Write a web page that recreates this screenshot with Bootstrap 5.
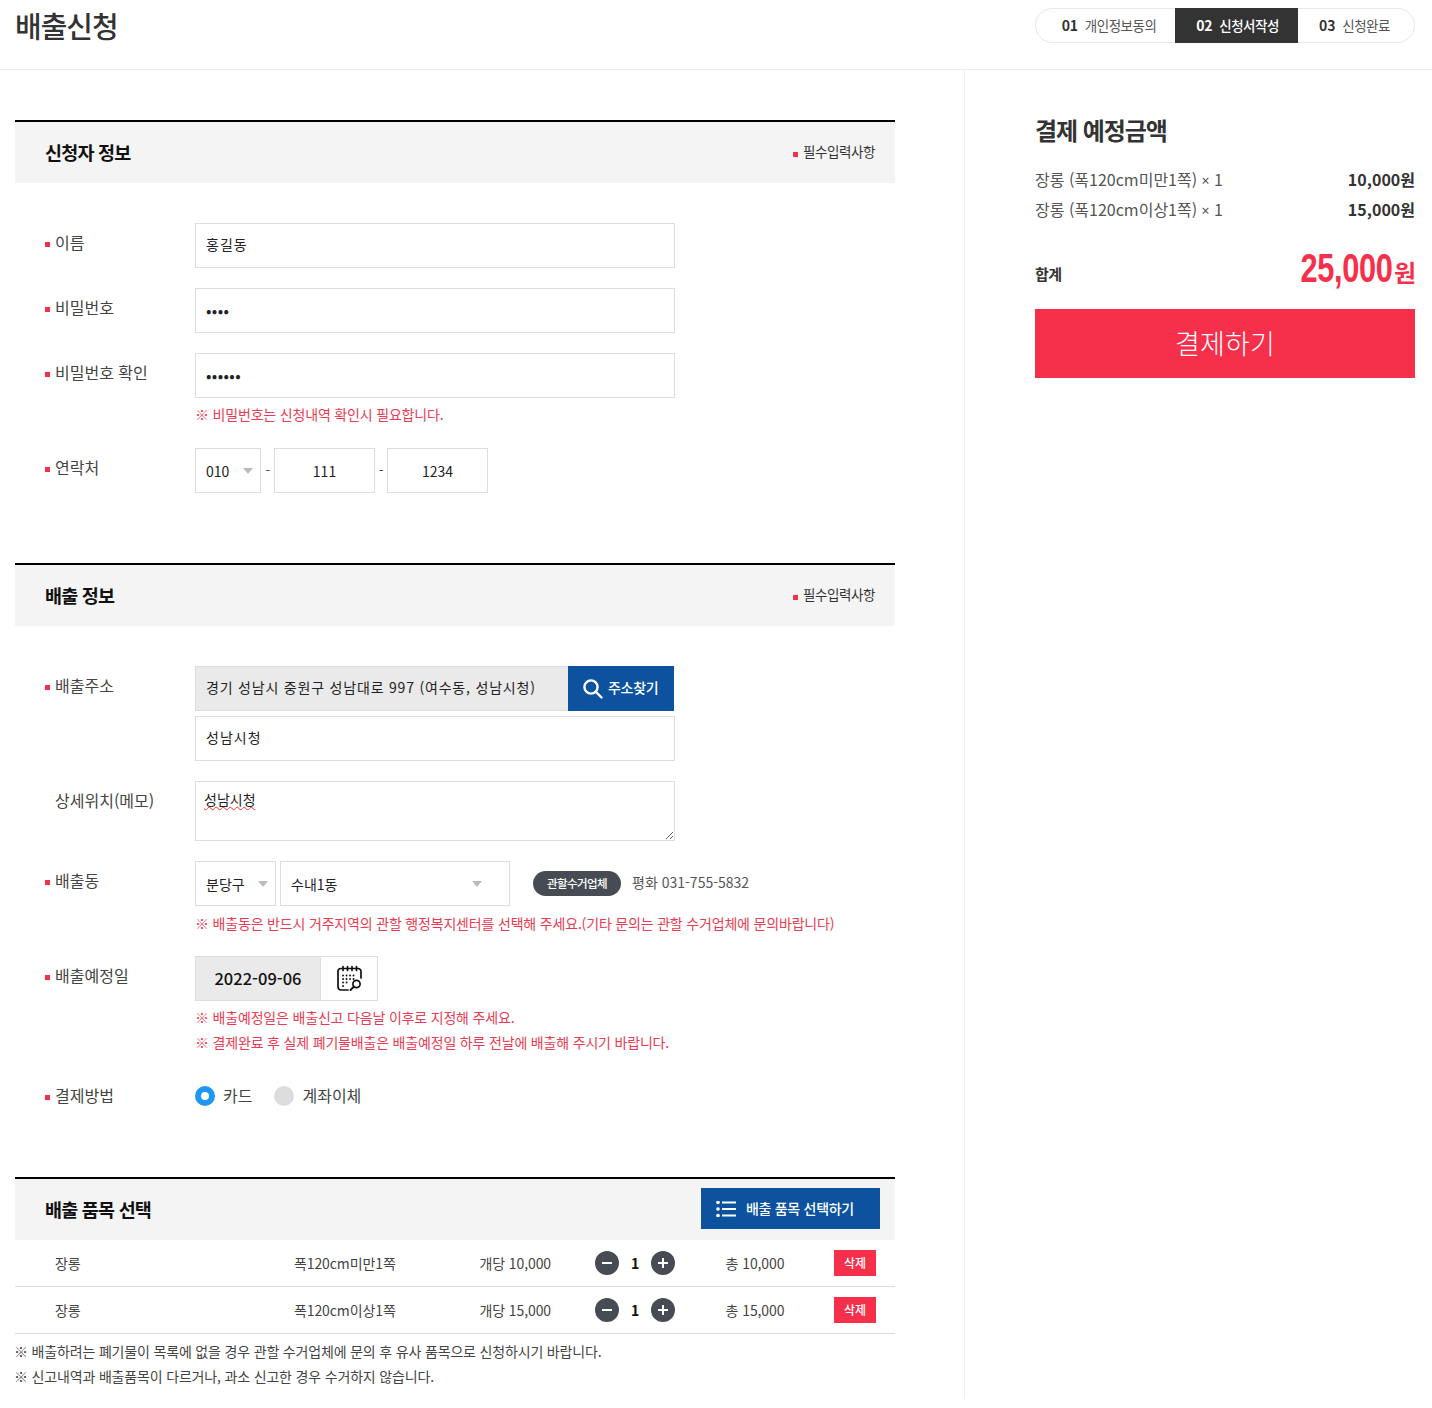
<!doctype html>
<html lang="ko">
<head>
<meta charset="utf-8">
<title>배출신청</title>
<link href="https://cdn.jsdelivr.net/npm/bootstrap@5.3.0/dist/css/bootstrap.min.css" rel="stylesheet">
<style>
body{font-family:"Noto Sans CJK KR","Noto Sans",sans-serif;font-size:14px;color:#333;letter-spacing:-.3px}
.top-bar{height:70px;border-bottom:1px solid #eee;padding:0 17px 0 15px}
.page-title{font-size:29px;font-weight:500;line-height:1;margin:0;color:#333;padding-top:11px;letter-spacing:-1px}
.step-list{margin-top:8px;height:35px;border:1px solid #e8e8e8;border-radius:18px;width:380px;font-size:13.5px;color:#555;letter-spacing:-.5px}
.step-item{height:35px;margin-top:-1px;display:flex;align-items:center;justify-content:center;gap:7px}
.step-item b{font-weight:700;color:#333;font-size:14px;letter-spacing:-.2px}
.step-a{width:139px;padding-left:7px}.step-b{width:123px;padding-left:2px;background:#333;color:#fff;font-weight:500}.step-b b{color:#fff}.step-c{flex:1;padding-right:3px}
.main-col{width:965px;border-right:1px solid #eee;padding:50px 69px 0 15px;height:1329px}
.side-col{width:467px;padding:39px 17px 0 70px}
.sect{border-top:2px solid #000}
.sect+.sect{margin-top:70px}
.sect-head{height:61px;background:#f4f4f4;padding:0 20px 0 30px}
.sect-title{font-size:18.5px;font-weight:700;color:#111;margin:0;letter-spacing:-.8px}
.req{font-size:13.5px;color:#333;letter-spacing:-.4px;margin-bottom:2px}
.req::before,.lab.must::before{content:"";display:inline-block;width:5px;height:5px;background:#f62f4b;margin-right:5px;vertical-align:middle}
.req::before{position:relative;top:1px}
.sect-body{padding:40px 0 0 30px}
.frow{display:flex;margin-bottom:20px}
.lab{width:150px;flex:none;font-size:16px;color:#444;padding:8px 0 0 10px;line-height:22px;letter-spacing:0}
.lab.must{padding-left:0}
.fbody{width:480px;flex:none}
.fwide{width:650px;flex:none}
.fld{display:block;height:45px;width:480px;border:1px solid #ddd;background:#fff;padding:0 10px;font-size:14px;color:#222;outline:0;letter-spacing:0;border-radius:0}
.fld.ko{letter-spacing:1px;padding-bottom:3px}
.fld.pw{font-size:16px;letter-spacing:.4px;padding-bottom:2px}
.fld.tc{text-align:center;width:101px}
.sel{appearance:none;padding-top:2px;background:#fff url("data:image/svg+xml,%3Csvg xmlns='http://www.w3.org/2000/svg' width='10' height='6'%3E%3Cpath d='M0 0h10L5 6z' fill='%23bbb'/%3E%3C/svg%3E") no-repeat right 7px center}
.sel.sel-tel{width:66px}
.sel.sel-gu{width:81px}
.sel.sel-wide{width:230px;background-position:right 27px center;margin-left:4px}
.notice{font-size:14px;color:#e83c52;line-height:25px;margin:5px 0 0;letter-spacing:-.18px;white-space:nowrap}
.notice.up{margin-top:4px}
.notice.tail{margin:4px 0 1px}
.notice.next{margin:0}
.dash{width:13px;text-align:center;color:#444;line-height:43px;font-size:13px}
.dash.dash-b{width:12px}
.addr-wrap{width:480px;height:45px;margin-bottom:5px}
.fld.addr-in{width:373px;background:#eaeaea;border-right:0;letter-spacing:.8px;padding-bottom:3px}
.btn-find{width:106px;height:45px;background:#0c529f;color:#fff;border:0;border-radius:0;font-size:14px;font-weight:500;padding:0 0 2px 15px;gap:5px;letter-spacing:-.3px}
.btn-find svg{margin-top:2px}
.btn-find:hover{background:#0c529f;color:#fff}
.fld.memo{height:60px;width:480px;padding:6px 8px;line-height:22px;font-size:14px;text-decoration:underline wavy #e33 1px;text-underline-offset:1px}
.gov-tag{background:#474c54;color:#fff;font-size:11.5px;font-weight:500;border-radius:13px;width:88px;height:25px;margin:10px 11px 0 23px;letter-spacing:-.6px}
.gov-tel{font-size:14px;color:#555;line-height:24px;margin-top:9px;letter-spacing:0}
.date-box{width:183px;height:45px;border:1px solid #ddd}
.date-val{width:125px;background:#eaeaea;font-size:16.5px;font-weight:500;color:#111;border-right:1px solid #ddd;letter-spacing:0}
.date-ico{flex:1;padding-left:1px}
.rad-row{margin-top:30px;height:22px;align-items:center}
.rad-row .lab{padding-top:0;padding-bottom:2px}
.rad{appearance:none;width:20px;height:20px;border-radius:50%;background:#ddd;margin:0;border:0;flex:none}
.rad:checked{background:#fff;border:6px solid #2196f3}
.rad-lab{font-size:16px;color:#444;margin-left:8px;margin-right:22px;letter-spacing:0;margin-bottom:2px}
.btn-pick{width:179px;height:41px;background:#0c529f;color:#fff;border:0;border-radius:0;font-size:14px;font-weight:500;margin-right:-5px;margin-bottom:2px;gap:10px;padding:0 0 0 15px;letter-spacing:-.3px}
.btn-pick:hover{background:#0c529f;color:#fff}
.item-row{height:47px;border-bottom:1px solid #ddd;font-size:14px;color:#444;letter-spacing:-.1px}
.c-name{width:279px;padding-left:40px}
.c-size{width:137px}
.c-price{width:164px;text-align:right;padding-right:44px;white-space:nowrap}
.c-qty{width:80px}
.c-qty b{width:32px;text-align:center;font-size:14px;font-weight:700;color:#111}
.round-btn{width:24px;height:24px;border-radius:50%;background:#474c54;border:0;padding:0;flex:none}
.c-total{width:110px;text-align:center;padding-left:50px;white-space:nowrap}
.del-btn{width:42px;height:26px;background:#f62f4b;color:#fff;border:0;border-radius:0;font-size:12px;padding:0;margin-left:49px;font-weight:500}
.del-btn:hover{background:#f62f4b;color:#fff}
.foot-note{font-size:14px;line-height:25px;color:#444;margin:5px 0 0 -1px;letter-spacing:-.17px}
.side-title{font-size:24px;font-weight:700;color:#333;margin:0 0 14px;line-height:42px;letter-spacing:-1.05px}
.pay-line{font-size:16px;line-height:29px;color:#555;letter-spacing:0}
.pay-line b{font-weight:700;color:#333;font-size:16px}
.mul{font-family:"Noto Sans",sans-serif;font-size:14px}
.total-line{margin-top:22px;height:56px}
.total-lab{font-size:15px;font-weight:700;color:#333;letter-spacing:-.6px;margin-bottom:2px}
.total-val{color:#f62f4b;font-size:24px;font-weight:700;line-height:46px;margin-bottom:10px;letter-spacing:-1px}
.total-num{display:inline-block;font-family:"Liberation Sans",sans-serif;font-size:41px;font-weight:700;letter-spacing:-.5px;transform:scaleX(.75);transform-origin:right center;margin-right:2px}
.pay-btn{display:block;width:100%;height:69px;margin-top:6px;background:#f62f4b;color:#fff;border:0;border-radius:0;font-size:27px;font-weight:300;letter-spacing:.1px;padding:0}
.pay-btn:hover{background:#f62f4b;color:#fff}
</style>
</head>
<body>
<header class="top-bar d-flex justify-content-between">
  <h1 class="page-title">배출신청</h1>
  <div class="step-list d-flex">
    <div class="step-item step-a"><b>01</b> 개인정보동의</div>
    <div class="step-item step-b"><b>02</b> 신청서작성</div>
    <div class="step-item step-c"><b>03</b> 신청완료</div>
  </div>
</header>
<div class="d-flex">
  <main class="main-col">
    <section class="sect">
      <div class="sect-head d-flex justify-content-between align-items-center">
        <h2 class="sect-title">신청자 정보</h2><span class="req">필수입력사항</span>
      </div>
      <div class="sect-body">
        <div class="frow"><div class="lab must">이름</div><div class="fbody"><input class="fld ko" value="홍길동"></div></div>
        <div class="frow"><div class="lab must">비밀번호</div><div class="fbody"><input class="fld pw" type="password" value="1234"></div></div>
        <div class="frow"><div class="lab must">비밀번호 확인</div><div class="fbody"><input class="fld pw" type="password" value="123456"><p class="notice tail">※ 비밀번호는 신청내역 확인시 필요합니다.</p></div></div>
        <div class="frow"><div class="lab must">연락처</div><div class="fbody d-flex">
          <select class="fld sel sel-tel"><option>010</option></select><span class="dash">-</span>
          <input class="fld tc" value="111"><span class="dash dash-b">-</span>
          <input class="fld tc" value="1234">
        </div></div>
      </div>
    </section>
    <section class="sect">
      <div class="sect-head d-flex justify-content-between align-items-center">
        <h2 class="sect-title">배출 정보</h2><span class="req">필수입력사항</span>
      </div>
      <div class="sect-body">
        <div class="frow"><div class="lab must">배출주소</div><div class="fbody">
          <div class="addr-wrap d-flex"><input class="fld addr-in" readonly value="경기 성남시 중원구 성남대로 997 (여수동, 성남시청)">
            <button class="btn btn-find d-flex align-items-center" type="button">
              <svg width="20" height="20" viewBox="0 0 20 20" fill="none" stroke="#fff" stroke-width="2.4" class="flex-shrink-0"><circle cx="8" cy="8" r="6.6"/><path d="M13 13l5.5 5.5" stroke-linecap="round"/></svg>주소찾기</button></div>
          <input class="fld ko" value="성남시청">
        </div></div>
        <div class="frow"><div class="lab">상세위치(메모)</div><div class="fbody"><textarea class="fld memo" spellcheck="false">성남시청</textarea></div></div>
        <div class="frow"><div class="lab must">배출동</div><div class="fwide">
          <div class="d-flex">
            <select class="fld sel sel-gu"><option>분당구</option></select>
            <select class="fld sel sel-wide"><option>수내1동</option></select>
            <span class="gov-tag d-inline-flex align-items-center justify-content-center">관할수거업체</span><span class="gov-tel">평화 031-755-5832</span>
          </div>
          <p class="notice">※ 배출동은 반드시 거주지역의 관할 행정복지센터를 선택해 주세요.(기타 문의는 관할 수거업체에 문의바랍니다)</p>
        </div></div>
        <div class="frow"><div class="lab must">배출예정일</div><div class="fwide">
          <div class="date-box d-flex">
            <div class="date-val d-flex align-items-center justify-content-center">2022-09-06</div>
            <div class="date-ico d-flex align-items-center justify-content-center">
              <svg width="28" height="28" viewBox="0 0 28 28" fill="none" stroke="#111" stroke-width="1.7" stroke-linecap="round"><path d="M12 25H5a3 3 0 0 1-3-3V6.5a3 3 0 0 1 3-3h17a3 3 0 0 1 3 3V13"/><path d="M7 1.5v4M11.5 1.5v4M16 1.5v4M20.5 1.5v4"/><path stroke-width="1.8" stroke-dasharray=".1 3.4" d="M7 10.5h13M7 14h13M7 17.5h7M7 21h3.5"/><circle cx="20.5" cy="19" r="3.6"/><path d="M17.8 21.8L14.5 25" stroke-width="2"/></svg>
            </div>
          </div>
          <p class="notice up">※ 배출예정일은 배출신고 다음날 이후로 지정해 주세요.</p>
          <p class="notice next">※ 결제완료 후 실제 폐기물배출은 배출예정일 하루 전날에 배출해 주시기 바랍니다.</p>
        </div></div>
        <div class="frow rad-row"><div class="lab must">결제방법</div><div class="fwide d-flex align-items-center">
          <input class="rad" type="radio" name="pay" checked aria-label="카드"><span class="rad-lab">카드</span>
          <input class="rad" type="radio" name="pay" aria-label="계좌이체"><span class="rad-lab">계좌이체</span>
        </div></div>
      </div>
    </section>
    <section class="sect">
      <div class="sect-head d-flex justify-content-between align-items-center">
        <h2 class="sect-title">배출 품목 선택</h2>
        <button class="btn btn-pick d-flex align-items-center" type="button">
          <svg width="20" height="16" viewBox="0 0 20 16" fill="#fff" class="flex-shrink-0"><circle cx="2" cy="1.5" r="1.8"/><circle cx="2" cy="8" r="1.8"/><circle cx="2" cy="14.5" r="1.8"/><rect x="6" y=".5" width="14" height="2"/><rect x="6" y="7" width="14" height="2"/><rect x="6" y="13.5" width="14" height="2"/></svg>배출 품목 선택하기</button>
      </div>
      <div class="item-row d-flex align-items-center">
        <div class="c-name">장롱</div><div class="c-size">폭120cm미만1쪽</div><div class="c-price">개당 10,000</div>
        <div class="c-qty d-flex align-items-center">
          <button class="round-btn d-flex align-items-center justify-content-center" type="button" aria-label="빼기"><svg width="12" height="12" viewBox="0 0 12 12"><rect x="1" y="5" width="10" height="2" fill="#fff"/></svg></button><b>1</b>
          <button class="round-btn d-flex align-items-center justify-content-center" type="button" aria-label="더하기"><svg width="12" height="12" viewBox="0 0 12 12"><path d="M1 5h4V1h2v4h4v2H7v4H5V7H1z" fill="#fff"/></svg></button>
        </div>
        <div class="c-total">총 10,000</div><button class="btn del-btn" type="button">삭제</button>
      </div>
      <div class="item-row d-flex align-items-center">
        <div class="c-name">장롱</div><div class="c-size">폭120cm이상1쪽</div><div class="c-price">개당 15,000</div>
        <div class="c-qty d-flex align-items-center">
          <button class="round-btn d-flex align-items-center justify-content-center" type="button" aria-label="빼기"><svg width="12" height="12" viewBox="0 0 12 12"><rect x="1" y="5" width="10" height="2" fill="#fff"/></svg></button><b>1</b>
          <button class="round-btn d-flex align-items-center justify-content-center" type="button" aria-label="더하기"><svg width="12" height="12" viewBox="0 0 12 12"><path d="M1 5h4V1h2v4h4v2H7v4H5V7H1z" fill="#fff"/></svg></button>
        </div>
        <div class="c-total">총 15,000</div><button class="btn del-btn" type="button">삭제</button>
      </div>
      <p class="foot-note">※ 배출하려는 폐기물이 목록에 없을 경우 관할 수거업체에 문의 후 유사 품목으로 신청하시기 바랍니다.<br>※ 신고내역과 배출품목이 다르거나, 과소 신고한 경우 수거하지 않습니다.</p>
    </section>
  </main>
  <aside class="side-col flex-grow-1">
    <h2 class="side-title">결제 예정금액</h2>
    <div class="pay-line d-flex justify-content-between"><span>장롱 (폭120cm미만1쪽) <span class="mul">×</span> 1</span><b>10,000원</b></div>
    <div class="pay-line d-flex justify-content-between"><span>장롱 (폭120cm이상1쪽) <span class="mul">×</span> 1</span><b>15,000원</b></div>
    <div class="total-line d-flex justify-content-between align-items-center"><span class="total-lab">합계</span><span class="total-val"><span class="total-num">25,000</span>원</span></div>
    <button class="btn pay-btn" type="button">결제하기</button>
  </aside>
</div>
<script src="https://cdn.jsdelivr.net/npm/bootstrap@5.3.0/dist/js/bootstrap.bundle.min.js"></script>
</body>
</html>
